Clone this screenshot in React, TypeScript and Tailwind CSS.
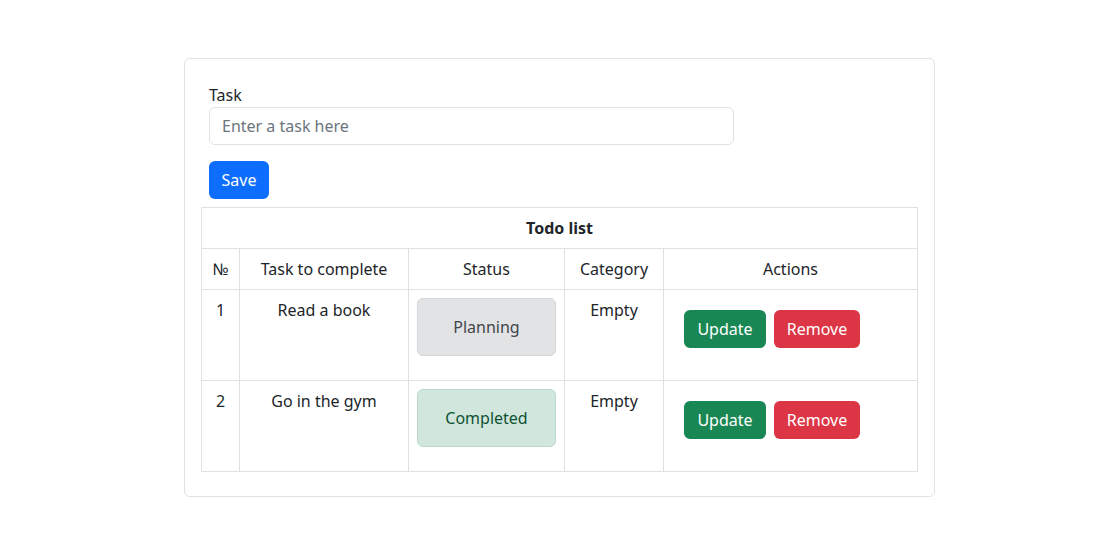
import React from "react";

type Row = {
    id: number;
    task: string;
    status: "Planning" | "Completed";
    category: string;
};

const rows: Row[] = [
    { id: 1, task: "Read a book", status: "Planning", category: "Empty" },
    { id: 2, task: "Go in the gym", status: "Completed", category: "Empty" },
];

const cell = "border border-[#dee2e6] px-2 py-2 align-top";

export default function App() {
    return (
        <div className="min-h-screen bg-white text-[#212529] text-base leading-6 font-['Noto_Sans',sans-serif] pt-[58px] pl-[184px]">
            {/* Card */}
            <div className="w-[751px] border border-[#dee2e6] rounded-md p-4">
                {/* Form */}
                <form className="px-2 pt-2" onSubmit={(e) => e.preventDefault()}>
                    <label className="block">Task</label>
                    <input
                        type="text"
                        placeholder="Enter a task here"
                        className="block w-[525px] h-[38px] px-3 border border-[#dee2e6] rounded-md placeholder:text-[#6c757d] outline-none"
                    />
                    <button className="mt-4 h-[38px] w-[60px] bg-[#0d6efd] text-white rounded-md">
                        Save
                    </button>
                </form>

                {/* Table */}
                <table className="mt-2 mb-2 w-[717px] table-fixed border-collapse text-center">
                    <colgroup>
                        <col className="w-[38px]" />
                        <col className="w-[169px]" />
                        <col className="w-[156px]" />
                        <col className="w-[99px]" />
                        <col />
                    </colgroup>
                    <thead>
                        <tr>
                            <th colSpan={5} className={`${cell} font-bold`}>
                                Todo list
                            </th>
                        </tr>
                        <tr>
                            <th className={`${cell} font-normal`}>№</th>
                            <th className={`${cell} font-normal`}>Task to complete</th>
                            <th className={`${cell} font-normal`}>Status</th>
                            <th className={`${cell} font-normal`}>Category</th>
                            <th className={`${cell} font-normal`}>Actions</th>
                        </tr>
                    </thead>
                    <tbody>
                        {rows.map((r) => (
                            <tr key={r.id}>
                                <td className={cell}>{r.id}</td>
                                <td className={cell}>{r.task}</td>
                                <td className={cell}>
                                    <div
                                        className={
                                            r.status === "Planning"
                                                ? "mb-4 py-4 border rounded-md bg-[#e2e3e5] border-[#d3d6d8] text-[#41464b]"
                                                : "mb-4 py-4 border rounded-md bg-[#d1e7dd] border-[#badbcc] text-[#0f5132]"
                                        }
                                    >
                                        {r.status}
                                    </div>
                                </td>
                                <td className={cell}>{r.category}</td>
                                <td className={cell}>
                                    <div className="flex gap-2 mt-3 ml-3">
                                        <button className="h-[38px] w-[82px] bg-[#198754] text-white rounded-md">
                                            Update
                                        </button>
                                        <button className="h-[38px] w-[86px] bg-[#dc3545] text-white rounded-md">
                                            Remove
                                        </button>
                                    </div>
                                </td>
                            </tr>
                        ))}
                    </tbody>
                </table>
            </div>
        </div>
    );
}
